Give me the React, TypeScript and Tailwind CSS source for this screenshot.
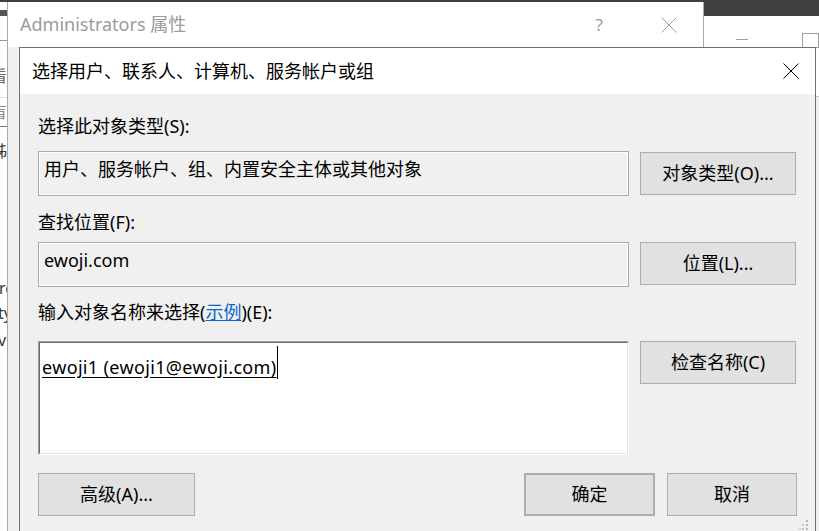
import React from 'react';

const font = "font-['Noto_Sans','Noto_Sans_CJK_SC',sans-serif]";

function Cross({ className }: { className?: string }) {
  return (
    <svg width="16" height="16" viewBox="0 0 16 16" className={className}>
      <path d="M0.5 0.5 L15.5 15.5 M15.5 0.5 L0.5 15.5" stroke="currentColor" strokeWidth="1" fill="none" />
    </svg>
  );
}

function Button({ children, className = '' }: { children: React.ReactNode; className?: string }) {
  return (
    <div
      className={`flex items-center justify-center h-[43px] bg-[#e1e1e1] border border-[#adadad] text-[18px] text-black ${className}`}
    >
      {children}
    </div>
  );
}

function ReadOnlyField({ value }: { value: string }) {
  return (
    <div className="w-[591px] h-[45px] border border-[#a9a9a9] shadow-[inset_0_0_0_1px_#ffffff] bg-[#f0f0f0] pl-[5px] pt-[5px] text-[18px] leading-[24px] text-black">
      {value}
    </div>
  );
}

export default function App() {
  return (
    <div className={`relative w-[819px] h-[531px] overflow-hidden bg-white ${font}`}>
      {/* desktop scraps on the left edge */}
      <div className="absolute left-0 top-0 w-[7px] h-full overflow-hidden bg-white text-[#333] text-[16px] leading-none">
        <div className="absolute left-0 top-[10px] w-[7px] h-[6px] bg-[#555]" />
        <div className="absolute left-0 top-[40px] w-[7px] h-px bg-[#999]" />
        <span className="absolute -left-[9px] top-[68px] text-[#666]">看</span>
        <div className="absolute left-0 top-[97px] w-[7px] h-px bg-[#ddd]" />
        <span className="absolute -left-[9px] top-[104px] text-[#888]">盲</span>
        <div className="absolute left-0 top-[126px] w-[7px] h-px bg-[#777]" />
        <span className="absolute -left-[9px] top-[143px]">秭</span>
        <span className="absolute -left-[1px] top-[280px]">rc</span>
        <span className="absolute -left-[2px] top-[305px]">ty</span>
        <span className="absolute -left-[2px] top-[332px]">vi</span>
      </div>

      <div className="absolute left-0 top-0 w-full h-[2px] bg-[#404040]" />

      {/* window behind, top right */}
      <div className="absolute left-[704px] top-0 w-[115px] h-full bg-white">
        <div className="h-[16px] bg-[#414141]" />
        <div className="flex items-start h-[80px]">
          <div className="ml-[32px] mt-[23px] w-[15px] h-px bg-[#a0a0a0]" />
          <div className="ml-[54px] mt-[17px] w-[20px] h-[15px] border border-[#a0a0a0]" />
        </div>
        <div className="border-t border-[#cccccc] h-full bg-[#f0f0f0]" />
      </div>

      {/* Administrators properties window */}
      <div className="absolute left-[7px] top-[2px] w-[697px] h-[529px] border-l border-r border-[#aaaaaa] bg-[#f0f0f0]">
        <div className="flex items-center h-[45px] bg-white pl-[12px] text-[18px] text-[#9b9b9b]">
          <span>Administrators 属性</span>
          <span className="ml-auto mr-[58px] text-[17px]">?</span>
          <Cross className="mr-[26px] text-[#9b9b9b]" />
        </div>
      </div>

      {/* picker dialog */}
      <div className="absolute left-[19px] top-[47px] w-[797px] h-[520px] border border-[#707070] bg-[#f0f0f0] flex flex-col">
        <div className="flex items-center h-[46px] bg-white pl-[12px] pr-[16px]">
          <span className="text-[18px] text-black">选择用户、联系人、计算机、服务帐户或组</span>
          <Cross className="ml-auto text-black" />
        </div>

        <div className="flex flex-col px-[18px] pt-[20px]">
          <div className="text-[18px] leading-[24px] text-black">选择此对象类型(S):</div>
          <div className="flex items-start gap-[11px] mt-[13px]">
            <ReadOnlyField value="用户、服务帐户、组、内置安全主体或其他对象" />
            <Button className="w-[156px] mt-px">对象类型(O)...</Button>
          </div>

          <div className="mt-[14px] text-[18px] leading-[24px] text-black">查找位置(F):</div>
          <div className="flex items-start gap-[11px] mt-[8px]">
            <ReadOnlyField value="ewoji.com" />
            <Button className="w-[156px]">位置(L)...</Button>
          </div>

          <div className="mt-[13px] text-[18px] leading-[24px] text-black">
            输入对象名称来选择(<span className="text-[#0a66c8] underline">示例</span>)(E):
          </div>
          <div className="flex items-start gap-[11px] mt-[17px]">
            <div className="w-[591px] h-[114px] border-t border-l border-[#a0a0a0] border-b border-r border-b-white border-r-white">
              <div className="h-full border-t border-l border-[#696969] border-b border-r border-b-[#e3e3e3] border-r-[#e3e3e3] bg-white pl-[2px] pt-[12px]">
                <div className="flex items-start">
                  <span className="text-[18px] leading-[24px] tracking-[0.35px] text-black underline underline-offset-[3px]">
                    ewoji1 (ewoji1@ewoji.com)
                  </span>
                  <span className="w-px h-[33px] bg-black -mt-[9px]" />
                </div>
              </div>
            </div>
            <Button className="w-[156px]">检查名称(C)</Button>
          </div>

          <div className="flex items-start mt-[18px]">
            <Button className="w-[157px]">高级(A)...</Button>
            <Button className="ml-auto w-[131px] border-2 border-[#0078d7]">确定</Button>
            <Button className="ml-[12px] w-[130px]">取消</Button>
          </div>
        </div>
      </div>

      {/* size grip */}
      <svg className="absolute left-[799px] top-[519px]" width="10" height="12" viewBox="0 0 10 12">
        <rect x="7" y="1" width="2" height="2" fill="#b8b8b8" />
        <rect x="7" y="5" width="2" height="2" fill="#b8b8b8" />
        <rect x="7" y="9" width="2" height="2" fill="#b8b8b8" />
        <rect x="3" y="5" width="2" height="2" fill="#c8c8c8" />
        <rect x="3" y="9" width="2" height="2" fill="#c8c8c8" />
        <rect x="0" y="9" width="2" height="2" fill="#d4d4d4" />
      </svg>
    </div>
  );
}
